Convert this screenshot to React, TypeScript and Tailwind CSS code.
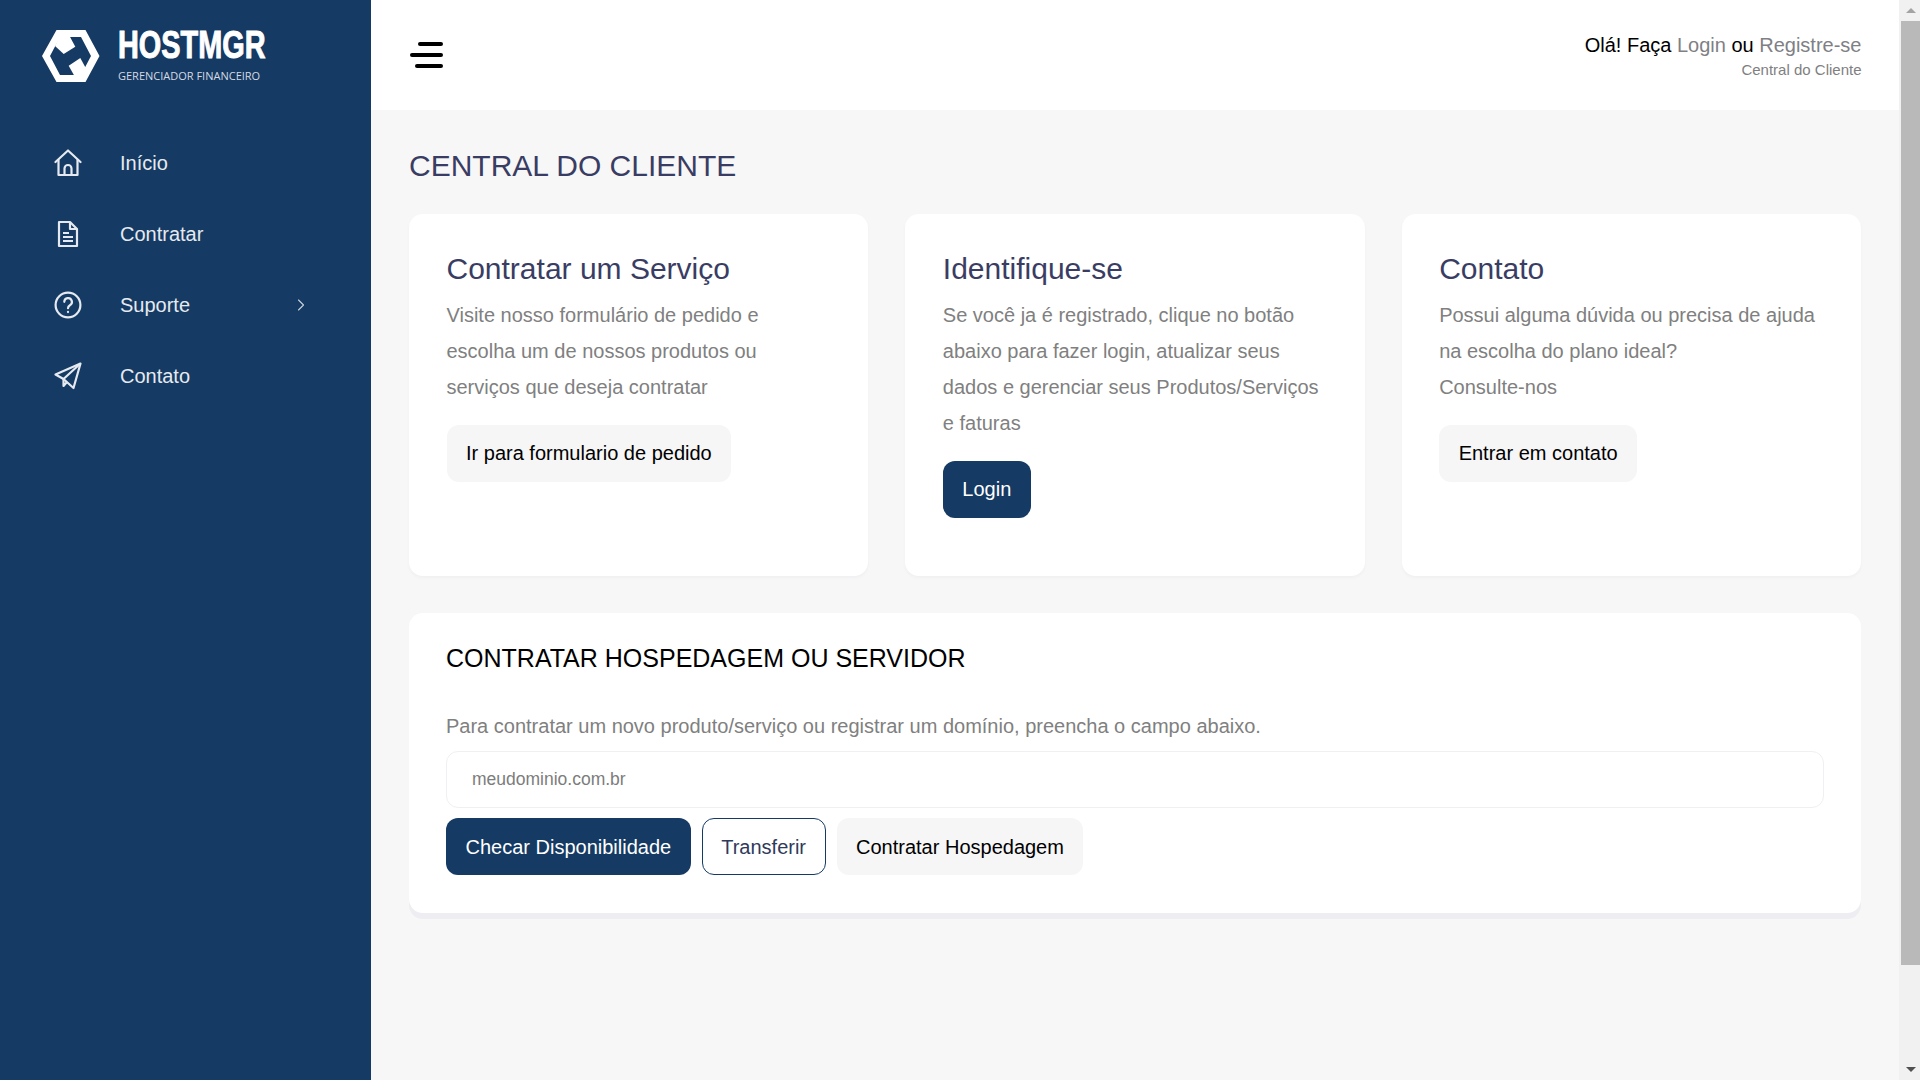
import { ChevronRight } from "lucide-react";

const font = "font-['Liberation_Sans',Arial,sans-serif]";

const HomeIcon = () => (
  <svg width="28" height="28" viewBox="0 0 28 28" fill="none" stroke="currentColor" strokeWidth="2.2" strokeLinejoin="round" strokeLinecap="round">
    <path d="M1.5 13 14 1.5 26.5 13" />
    <path d="M4.5 11v15h19V11" />
    <path d="M10.5 26v-6.5a3.5 3.5 0 0 1 7 0V26" />
  </svg>
);

const DocIcon = () => (
  <svg width="28" height="28" viewBox="0 0 28 28" fill="none" stroke="currentColor" strokeWidth="2.2" strokeLinejoin="round">
    <path d="M5 2h11l7 7v17H5z" />
    <path d="M16 2v7h7" />
    <path d="M9 13h6M9 17h10M9 21h10" />
  </svg>
);

const HelpIcon = () => (
  <svg width="28" height="28" viewBox="0 0 28 28" fill="none" stroke="currentColor" strokeWidth="2.2" strokeLinecap="round">
    <circle cx="14" cy="14" r="12.4" />
    <path d="M10.3 10.8a3.8 3.8 0 1 1 5.6 3.4c-1.3.8-1.9 1.500-1.900 3" />
    <path d="M14 20.800v.3" />
  </svg>
);

const SendIcon = () => (
  <svg width="28" height="28" viewBox="0 0 28 28" fill="none" stroke="currentColor" strokeWidth="2.2" strokeLinejoin="round">
    <path d="M26.500 1.500 1.500 12.500l8 4.500 10 9z" />
    <path d="M26.500 1.500 9.500 17v7l3.500-4" />
  </svg>
);

const Logo = () => (
  <div className="flex items-center gap-[18px]">
    <svg width="58" height="52" viewBox="0 0 58 52">
      <path
        fillRule="evenodd"
        fill="#fff"
        d="M14.500 0h29L57.500 26 43.500 52h-29L0 26zM18 7 8 26l10 19h21l10-19L39 7z"
      />
      <path fill="#fff" d="M13 16 21.700 24 33.300 16.700 27 5H18z" />
      <path fill="#fff" d="M26.700 35.700 38.300 28 44.300 39 39 47H33z" />
    </svg>
    <div className="mt-[-2px] flex flex-col text-white">
      <span className="w-[146px] origin-left scale-x-[0.74] whitespace-nowrap text-[39px] leading-[35px] font-bold [-webkit-text-stroke:1px_white]">HOSTMGR</span>
      <span className="mt-[7px] font-['Open_Sans',sans-serif] text-[11px] leading-[14px] whitespace-nowrap text-[#d5dbe4]">GERENCIADOR FINANCEIRO</span>
    </div>
  </div>
);

const NavItem = ({ icon, label, arrow }: { icon: React.ReactNode; label: string; arrow?: boolean }) => (
  <a className="flex h-[71px] items-center text-[#e6eaf0]">
    <span className="ml-[-1px] flex w-[66px] justify-start">{icon}</span>
    <span className="text-[20px]">{label}</span>
    {arrow && <ChevronRight className="ml-auto mr-[-5px] text-[#c9d2de]" size={20} strokeWidth={1.3} />}
  </a>
);

const Card = ({ title, children }: { title: string; children: React.ReactNode }) => (
  <div className="h-[362px] rounded-[14px] bg-white px-[37.500px] pt-[36.500px] shadow-[0_2px_3px_#f0f0f3]">
    <h3 className="text-[30px] leading-[36px] text-[#3a3d63]">{title}</h3>
    {children}
  </div>
);

const Btn = ({ children, kind = "light" }: { children: React.ReactNode; kind?: "light" | "dark" | "line" }) => {
  const cls =
    kind === "dark"
      ? "bg-[#153a63] px-[19.500px] text-white"
      : kind === "line"
        ? "border border-[#153a63] bg-white px-[18.500px] text-[#2f3a5c]"
        : "bg-[#f6f6f7] px-[19.500px] text-black";
  return <button className={`h-[57px] rounded-[12px] text-[20px] ${cls}`}>{children}</button>;
};

export default function App() {
  return (
    <div className={`flex h-screen overflow-hidden bg-[#f7f7f7] ${font}`}>
      <aside className="w-[371px] shrink-0 bg-[#153a63] pl-[42px] pr-[65px] pt-[29px]">
        <Logo />
        <nav className="mt-[44.500px] pl-[13px]">
          <NavItem icon={<HomeIcon />} label="Início" />
          <NavItem icon={<DocIcon />} label="Contratar" />
          <NavItem icon={<HelpIcon />} label="Suporte" arrow />
          <NavItem icon={<SendIcon />} label="Contato" />
        </nav>
      </aside>

      <main className="min-w-0 flex-1">
        <header className="flex h-[110px] items-center justify-between bg-white pl-[38px] pr-[37.500px]">
          <div className="flex w-[34px] flex-col items-end gap-[7px]">
            <span className="h-[4px] w-[25px] rounded-full bg-black" />
            <span className="h-[4px] w-[33px] rounded-full bg-black" />
            <span className="h-[4px] w-[28px] rounded-full bg-black" />
          </div>
          <div className="text-right">
            <p className="text-[20px] leading-[28px] text-black">
              Olá! Faça <span className="text-[#7f7f86]">Login</span> ou <span className="text-[#7f7f86]">Registre-se</span>
            </p>
            <p className="mt-[1px] text-[15px] leading-[20px] text-[#7f7f7f]">Central do Cliente</p>
          </div>
        </header>

        <div className="px-[38px] pt-[38px]">
          <h2 className="text-[30px] leading-[36px] text-[#3a3d63]">CENTRAL DO CLIENTE</h2>
          <div className="mt-[30px] grid grid-cols-3 gap-[37px]">
            <Card title="Contratar um Serviço">
              <p className="mb-[19.500px] mt-[10.500px] text-[20px] leading-[36px] text-[#808080]">
                Visite nosso formulário de pedido e escolha um de nossos produtos ou serviços que deseja contratar
              </p>
              <Btn>Ir para formulario de pedido</Btn>
            </Card>
            <Card title="Identifique-se">
              <p className="mb-[19.500px] mt-[10.500px] text-[20px] leading-[36px] text-[#808080]">
                Se você ja é registrado, clique no botão abaixo para fazer login, atualizar seus dados e gerenciar seus Produtos/Serviços e faturas
              </p>
              <Btn kind="dark">Login</Btn>
            </Card>
            <Card title="Contato">
              <p className="mb-[19.500px] mt-[10.500px] text-[20px] leading-[36px] text-[#808080]">
                Possui alguma dúvida ou precisa de ajuda na escolha do plano ideal?
                <br />
                Consulte-nos
              </p>
              <Btn>Entrar em contato</Btn>
            </Card>
          </div>

          <section className="mt-[37px] h-[300px] rounded-[14px] bg-white px-[37px] pt-[28px] shadow-[0_6px_0_#eeeef2]">
            <h3 className="text-[25px] leading-[34px] text-black">CONTRATAR HOSPEDAGEM OU SERVIDOR</h3>
            <p className="mt-[32.500px] text-[20px] leading-[36px] text-[#808080]">
              Para contratar um novo produto/serviço ou registrar um domínio, preencha o campo abaixo.
            </p>
            <input
              className="mt-[7.500px] h-[57px] w-full rounded-[12px] border border-[#f0f0f2] px-[25px] text-[17.500px] text-[#7c7c7c] placeholder:text-[#7c7c7c]"
              placeholder="meudominio.com.br"
            />
            <div className="mt-[10px] flex gap-[11px]">
              <Btn kind="dark">Checar Disponibilidade</Btn>
              <Btn kind="line">Transferir</Btn>
              <Btn>Contratar Hospedagem</Btn>
            </div>
          </section>
        </div>
      </main>

      <div className="flex w-[21px] shrink-0 flex-col items-center bg-[#f1f1f1] pl-[2px]">
        <div className="flex h-[21px] w-full items-center justify-center">
          <div className="h-0 w-0 border-x-[5px] border-b-[5px] border-x-transparent border-b-[#a3a3a3]" />
        </div>
        <div className="h-[944px] w-full bg-[#b9b9b9]" />
        <div className="flex flex-1 w-full items-end justify-center pb-[8px]">
          <div className="h-0 w-0 border-x-[5px] border-t-[5px] border-x-transparent border-t-[#505050]" />
        </div>
      </div>
    </div>
  );
}
